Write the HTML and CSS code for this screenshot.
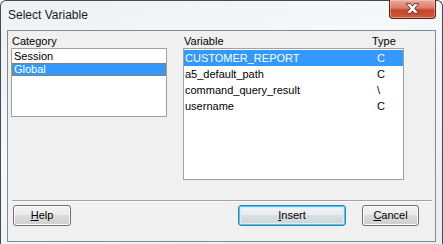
FILE: index.html
```html
<!DOCTYPE html>
<html>
<head>
<meta charset="utf-8">
<link rel="stylesheet" href="styles.css">
</head>
<body>
<div class="window">
  <div class="titlebar">
    <span class="title">Select Variable</span>
    <div class="close">
      <svg width="47" height="19" viewBox="0 0 47 19">
        <path d="M17 4.5 H21.5 L23.5 7 L25.5 4.5 H30 L25.8 9.5 L30 14.5 H25.5 L23.5 12 L21.5 14.5 H17 L21.2 9.5 Z" fill="#ffffff" stroke="#6b2a1e" stroke-width="1" stroke-linejoin="round"/>
      </svg>
    </div>
  </div>
  <div class="client">
    <div class="panes">
      <div class="pane cat">
        <div class="hdr">Category</div>
        <div class="list cat-list">
          <div class="row">Session</div>
          <div class="row sel focus">Global</div>
        </div>
      </div>
      <div class="pane var">
        <div class="hdr vhdr"><span class="vname">Variable</span><span class="vtype">Type</span></div>
        <div class="list var-list">
          <div class="vrow sel"><span class="vname">CUSTOMER_REPORT</span><span class="vtype">C</span></div>
          <div class="vrow"><span class="vname">a5_default_path</span><span class="vtype">C</span></div>
          <div class="vrow"><span class="vname">command_query_result</span><span class="vtype">\</span></div>
          <div class="vrow"><span class="vname">username</span><span class="vtype">C</span></div>
        </div>
      </div>
    </div>
    <div class="sep"></div>
    <div class="buttons">
      <button class="btn help"><u>H</u>elp</button>
      <span class="spacer"></span>
      <button class="btn insert default"><u>I</u>nsert</button>
      <button class="btn cancel"><u>C</u>ancel</button>
    </div>
  </div>
</div>
</body>
</html>
```
FILE: styles.css
```css
* { box-sizing: border-box; }
html, body { margin: 0; padding: 0; background: #ffffff; }
body { font-family: "Liberation Sans", Arial, sans-serif; font-size: 11px; color: #000; }

.window {
  width: 443px;
  height: 244px;
  border: 1px solid #454a52;
  border-bottom: none;
  border-radius: 6px 6px 0 0;
  background: linear-gradient(160deg, #eef1f5 0%, #f6f8fa 40%, #e9edf2 100%);
  padding: 0 6px 0 6px;
  display: flex;
  flex-direction: column;
}

.titlebar {
  height: 29px;
  display: flex;
  justify-content: space-between;
  align-items: flex-start;
}
.title {
  font-size: 12px;
  line-height: 14px;
  padding-top: 7px;
  padding-left: 1px;
  color: #1a1a1a;
}
.close {
  width: 47px;
  height: 19px;
  margin-top: -1px;
  border: 1px solid #5a2419;
  border-top: none;
  border-radius: 0 0 4px 4px;
  background: linear-gradient(#e9a89a 0%, #dc7b66 45%, #c8432a 55%, #cc5a3f 100%);
  box-shadow: inset 0 0 0 1px rgba(255,220,210,0.45);
  display: flex;
  align-items: center;
  justify-content: center;
  overflow: hidden;
}
.close svg { display: block; margin-top: -1px; }

.client {
  width: 429px;
  height: 212px;
  border: 1px solid #838a94;
  background: #f0f0f0;
  padding-top: 3px;
  display: flex;
  flex-direction: column;
}

.panes {
  display: flex;
  gap: 16px;
  padding-left: 3px;
}
.pane { display: flex; flex-direction: column; }
.cat { width: 156px; }
.var { width: 221px; }

.hdr {
  line-height: 14px;
  padding-left: 1px;
  white-space: nowrap;
}
.vhdr { display: flex; }
.vhdr .vname { width: 188px; }

.list {
  background: #ffffff;
  border: 1px solid #a0a0a0;
  padding-top: 1px;
}
.cat-list { height: 69px; }
.var-list { height: 132px; }

.row {
  height: 13px;
  line-height: 13px;
  padding-left: 2px;
  white-space: nowrap;
}
.vrow {
  height: 16px;
  line-height: 16px;
  display: flex;
  padding-left: 1px;
  white-space: nowrap;
}
.vrow .vname { width: 192px; }
.sel { background: #3399ff; color: #ffffff; }
.focus { outline: 1px dotted #cc6600; outline-offset: -1px; }

.sep {
  margin: 20px 3px 0 4px;
  height: 2px;
  border-top: 1px solid #a0a0a0;
  border-bottom: 1px solid #ffffff;
}

.buttons {
  display: flex;
  margin-top: 3px;
  padding: 0 16px 0 5px;
}
.spacer { flex: 1; }
.btn {
  height: 21px;
  font-family: "Liberation Sans", Arial, sans-serif;
  font-size: 11px;
  color: #000;
  padding: 0;
  border: 1px solid #707070;
  border-radius: 3px;
  background: linear-gradient(#f2f2f2 0%, #ebebeb 50%, #dddddd 50%, #cfcfcf 100%);
  box-shadow: inset 0 0 0 1px #fbfbfb;
  line-height: 19px;
}
.btn u { text-decoration: underline; text-underline-offset: 1px; }
.help { width: 58px; }
.insert { width: 108px; margin-right: 16px; }
.cancel { width: 57px; }
.default {
  border-color: #3c7fb1;
  box-shadow: inset 0 0 0 1px #48c8f4, inset 0 0 0 2px #d8f0fa;
  background: linear-gradient(#f1f3f5 0%, #e9ecee 50%, #dadee1 50%, #cfd4d8 100%);
}
```
